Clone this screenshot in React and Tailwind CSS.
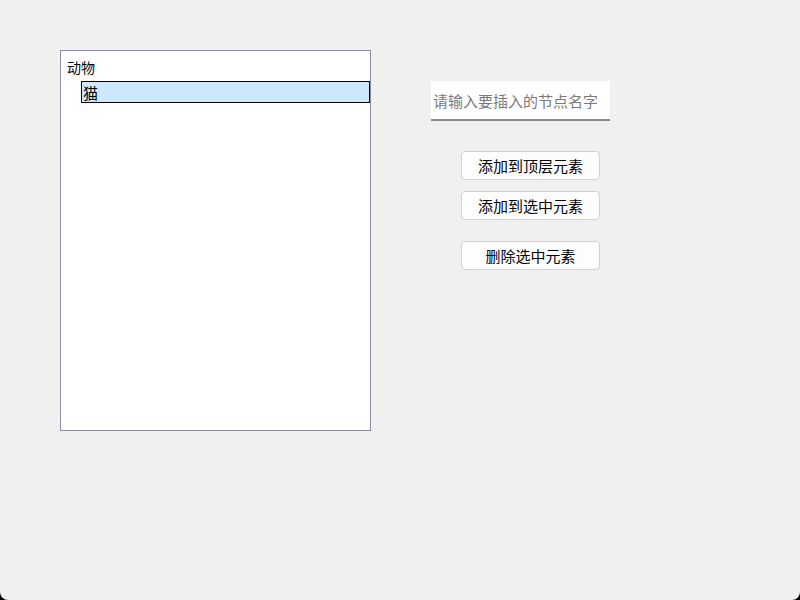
import React from 'react';

const font = { fontFamily: '"Noto Sans CJK SC", "Noto Sans", sans-serif' };

const Btn = ({ children, className = '' }) => (
    <button className={`w-[139px] h-[29px] bg-[#fdfdfd] border border-[#d0d0d0] rounded-[4px] text-[15px] text-black leading-none flex items-center justify-center ${className}`}>
        {children}
    </button>
);

const App = () => {
    return (
        <div className="w-[800px] h-[600px] bg-black" style={font}>
            <div className="w-full h-full bg-[#f0f0f0] rounded-b-[8px] flex pt-[50px] pl-[60px]">
                {/* Tree */}
                <div className="w-[311px] h-[381px] bg-white border border-[#8c8ca0] flex flex-col">
                    <div className="pl-[6px] pt-[8px] h-[30px] text-[14px] leading-[16px] text-black">动物</div>
                    <div className="ml-[20px] mr-0 h-[22px] bg-[#cce8ff] border border-black flex items-center pl-[1px] text-[15px] text-black leading-none">
                        猫
                    </div>
                </div>

                {/* Controls */}
                <div className="ml-[60px] pt-[31px] flex flex-col">
                    <input
                        className="w-[179px] h-[40px] bg-white border-b-2 border-[#8a8a8a] px-[2px] text-[15px] outline-none placeholder:text-[#7a7a7a]"
                        placeholder="请输入要插入的节点名字"
                    />
                    <div className="ml-[30px] mt-[30px] flex flex-col">
                        <Btn>添加到顶层元素</Btn>
                        <Btn className="mt-[11px]">添加到选中元素</Btn>
                        <Btn className="mt-[21px]">删除选中元素</Btn>
                    </div>
                </div>
            </div>
        </div>
    );
};

export default App;
